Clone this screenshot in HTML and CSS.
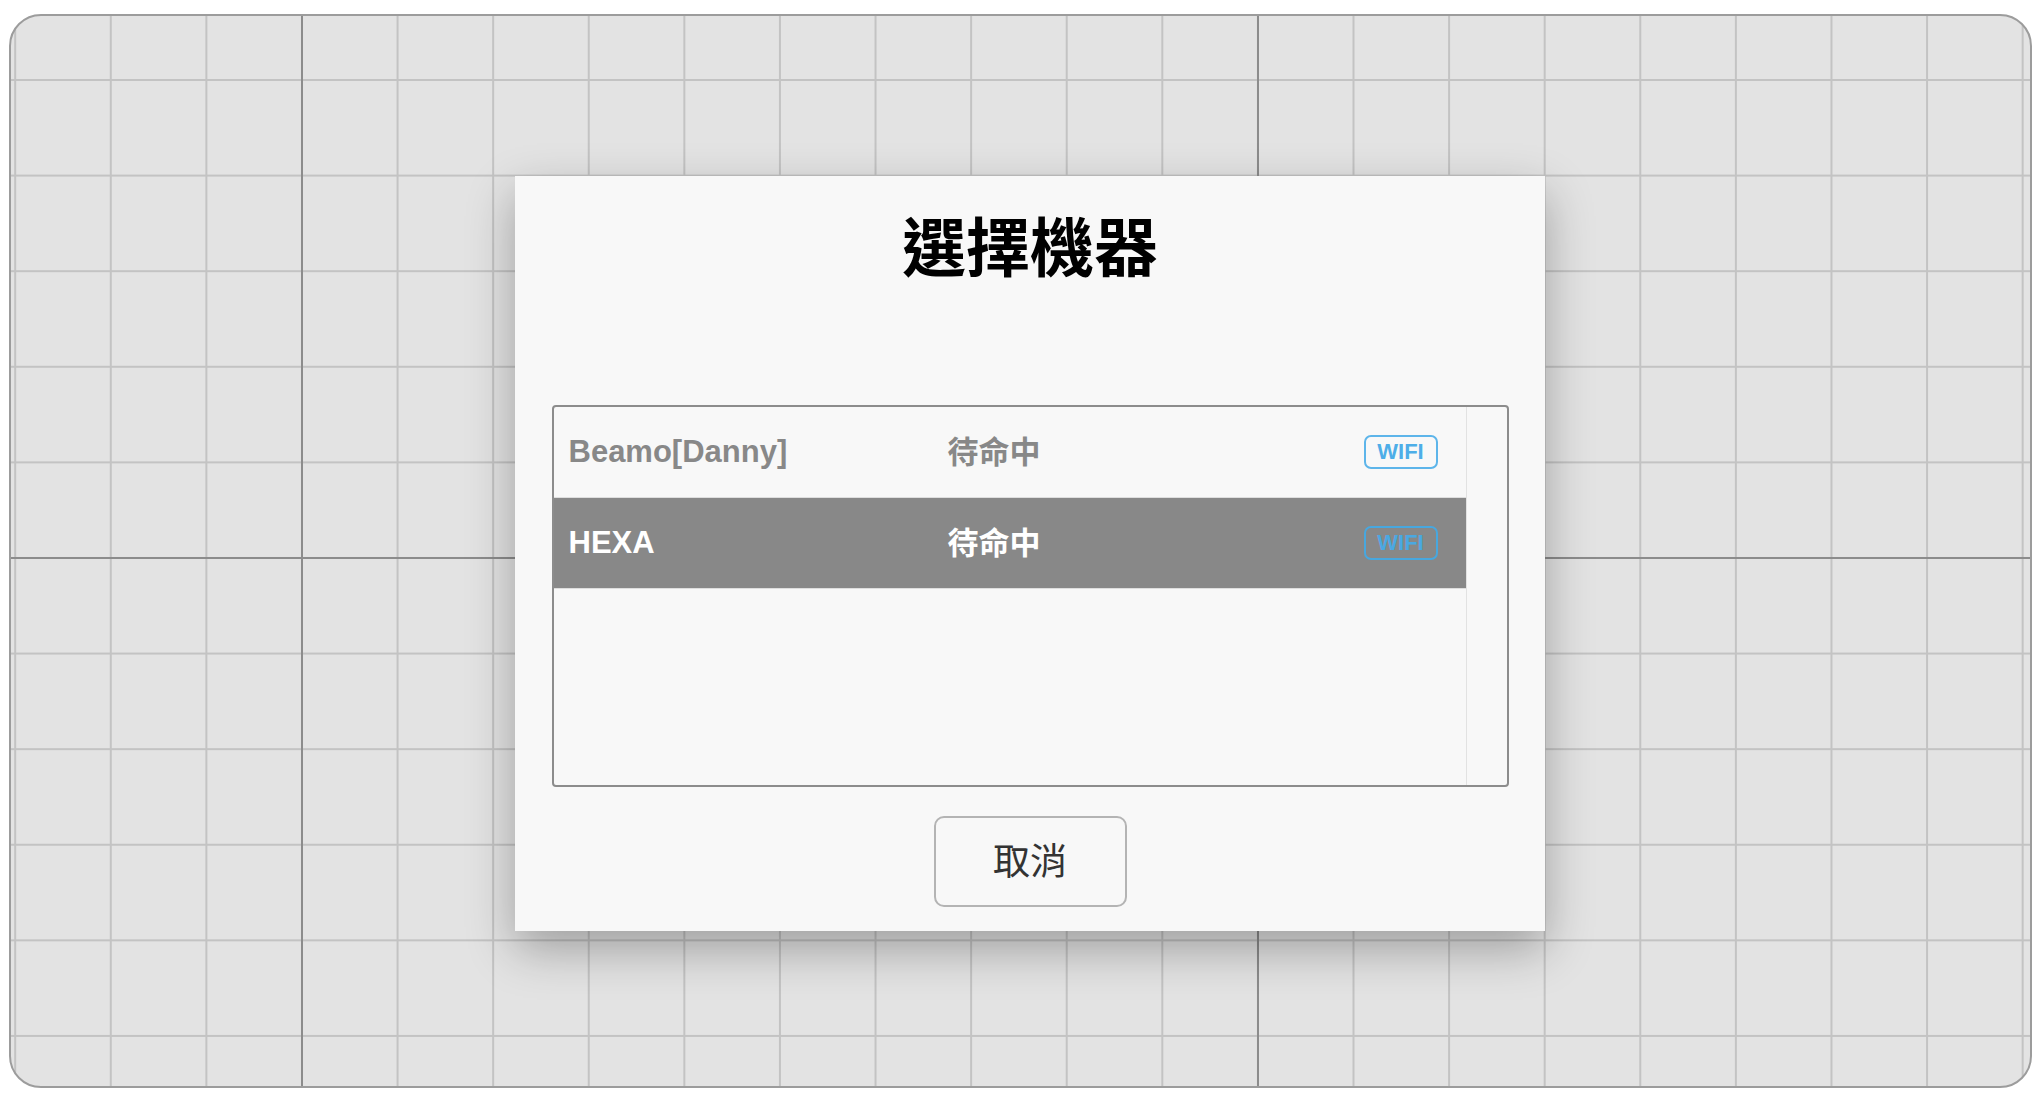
FILE: index.html
```html
<!DOCTYPE html>
<html lang="zh-Hant">
<head>
<meta charset="utf-8">
<title>選擇機器</title>
<link rel="stylesheet" href="styles.css">
</head>
<body>
<div class="canvas"></div>
<div class="overlay">
  <div class="dialog">
    <h1 class="title">選擇機器</h1>
    <div class="list">
      <div class="rows">
        <div class="row">
          <span class="name">Beamo[Danny]</span>
          <span class="status">待命中</span>
          <span class="badge">WIFI</span>
        </div>
        <div class="row selected">
          <span class="name">HEXA</span>
          <span class="status">待命中</span>
          <span class="badge">WIFI</span>
        </div>
      </div>
      <div class="scrollbar"></div>
    </div>
    <button class="cancel">取消</button>
  </div>
</div>
</body>
</html>
```

FILE: styles.css
```css
html, body {
  margin: 0;
  padding: 0;
  background: #ffffff;
}

body {
  width: 2044px;
  height: 1102px;
  overflow: hidden;
  position: relative;
  font-family: "Liberation Sans", "Noto Sans CJK TC", sans-serif;
}

.canvas {
  box-sizing: border-box;
  margin: 14px 0 0 9px;
  width: 2023px;
  height: 1074px;
  border: 2px solid #9c9c9c;
  border-radius: 32px;
  background-color: #e3e3e3;
  background-image:
    linear-gradient(to right, #8c8c8c 0 2px, transparent 2px),
    linear-gradient(to bottom, #8c8c8c 0 2px, transparent 2px),
    linear-gradient(to right, #c3c3c3 0 2px, transparent 2px),
    linear-gradient(to bottom, #c3c3c3 0 2px, transparent 2px);
  background-size: 956px 100%, 100% 956px, 95.6px 100%, 100% 95.6px;
  background-position: 290px 0, 0 541px, 3.2px 0, 0 63px;
}

.overlay {
  position: absolute;
  inset: 0;
  display: flex;
  justify-content: center;
  align-items: center;
  padding: 5px 0 0 16px;
  box-sizing: border-box;
}

.dialog {
  box-sizing: border-box;
  width: 1030px;
  height: 755px;
  background: #f8f8f8;
  box-shadow: 0 18px 45px rgba(0, 0, 0, 0.3);
  display: flex;
  flex-direction: column;
  align-items: center;
  padding: 35px 36px 24px 36px;
}

.title {
  margin: 0;
  font-family: "Noto Sans CJK TC", sans-serif;
  font-weight: 700;
  font-size: 64px;
  line-height: 64px;
  color: #000;
}

.list {
  box-sizing: border-box;
  margin-top: 130px;
  width: 957px;
  height: 382px;
  border: 2px solid #8c8c8c;
  border-radius: 4px;
  display: flex;
  background: #f8f8f8;
}

.rows {
  flex: 1;
  display: flex;
  flex-direction: column;
}

.row {
  box-sizing: border-box;
  height: 91px;
  border-bottom: 1px solid #dedede;
  display: flex;
  align-items: center;
  padding: 0 28px 0 15px;
  color: #888888;
}

.row.selected {
  background: #888888;
  color: #ffffff;
}

.name {
  width: 379px;
  font-family: "Liberation Sans", sans-serif;
  font-weight: 700;
  font-size: 31px;
}

.status {
  flex: 1;
  font-family: "Noto Sans CJK TC", sans-serif;
  font-weight: 700;
  font-size: 31px;
  padding-bottom: 6px;
}

.badge {
  box-sizing: border-box;
  width: 74px;
  height: 34px;
  border: 2px solid #5db5ea;
  border-radius: 7px;
  display: flex;
  align-items: center;
  justify-content: center;
  font-family: "Liberation Sans", sans-serif;
  font-weight: 700;
  font-size: 22px;
  color: #4eaee8;
}

.row.selected .badge {
  border-color: #47a7df;
  color: #4aa8e2;
}

.scrollbar {
  width: 40px;
  border-left: 1px solid #e2e2e2;
}

.cancel {
  box-sizing: border-box;
  margin-top: 29px;
  width: 193px;
  height: 91px;
  border: 2px solid #b4b4b4;
  border-radius: 10px;
  background: #f8f8f8;
  font-family: "Noto Sans CJK TC", sans-serif;
  font-size: 37px;
  color: #333333;
  padding: 0 0 6px 0;
}
```
